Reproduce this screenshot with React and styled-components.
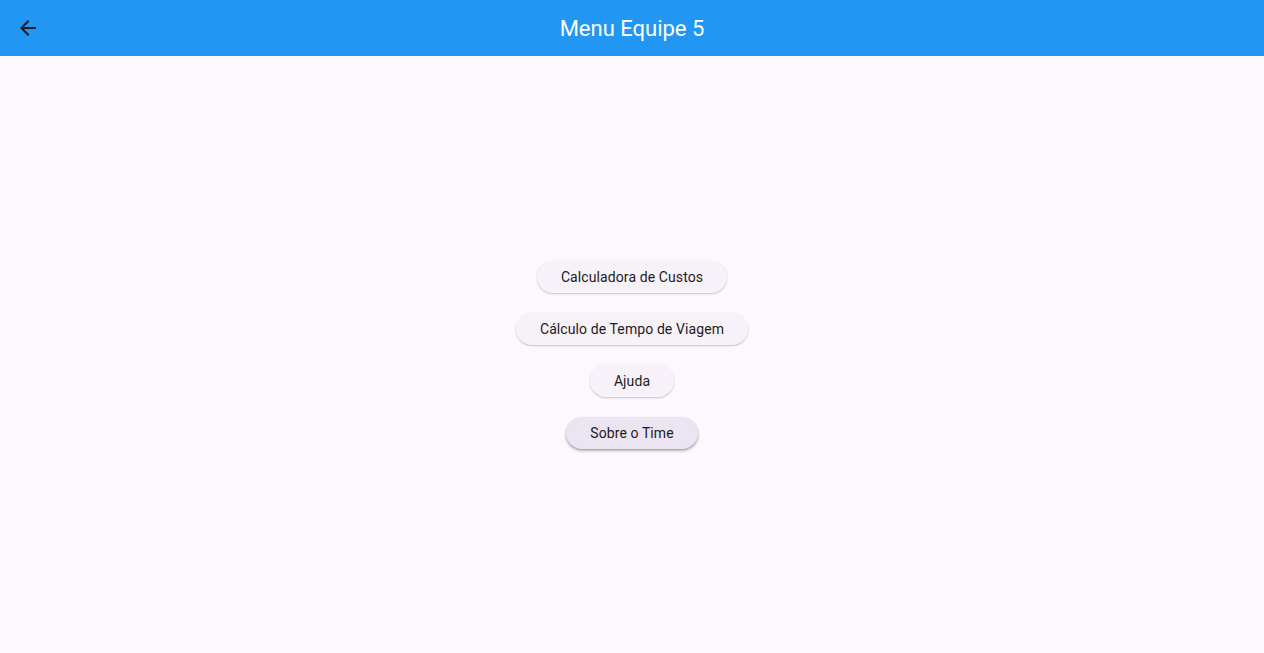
import React from "react";
import styled, { createGlobalStyle } from "styled-components";

const Global = createGlobalStyle`
  html, body { margin: 0; padding: 0; height: 100%; }
  body { background: #fdf7fe; font-family: Roboto, "Noto Sans", sans-serif; }
  #root { height: 100%; }
`;

const Page = styled.div`
  display: flex;
  flex-direction: column;
  height: 100vh;
  background: #fdf7fe;
`;

const AppBar = styled.header`
  height: 56px;
  flex: 0 0 56px;
  background: #2196f3;
  display: flex;
  align-items: center;
  position: relative;
`;

const BackButton = styled.button`
  width: 56px;
  height: 56px;
  border: none;
  background: transparent;
  padding: 0;
  display: flex;
  align-items: center;
  justify-content: center;
  cursor: pointer;
  color: #1d1b20;
`;

const Title = styled.h1`
  position: absolute;
  left: 0;
  right: 0;
  top: 0;
  height: 56px;
  margin: 0;
  display: flex;
  align-items: center;
  justify-content: center;
  font-family: Roboto, sans-serif;
  font-weight: 400;
  font-size: 22px;
  color: #ffffff;
  pointer-events: none;
`;

const Body = styled.main`
  flex: 1;
  display: flex;
  flex-direction: column;
  align-items: center;
  justify-content: center;
  gap: 20px;
`;

const MenuButton = styled.button`
  height: 32px;
  padding: 0 24px;
  border: none;
  border-radius: 16px;
  background: ${(p) => (p.$hover ? "#ebe5f1" : "#f7f2f9")};
  color: #1d1b20;
  font-family: Roboto, sans-serif;
  font-size: 14px;
  font-weight: 400;
  letter-spacing: 0.1px;
  box-shadow: ${(p) =>
    p.$hover
      ? "0 2px 3px rgba(0,0,0,0.25), 0 1px 2px rgba(0,0,0,0.15)"
      : "0 1px 2px rgba(0,0,0,0.22)"};
  cursor: pointer;
`;

const items = [
  { label: "Calculadora de Custos" },
  { label: "Cálculo de Tempo de Viagem" },
  { label: "Ajuda" },
  { label: "Sobre o Time", hover: true },
];

export default function App() {
  return (
    <Page>
      <Global />
      <AppBar>
        <BackButton aria-label="Voltar">
          <svg width="24" height="24" viewBox="0 0 24 24" fill="currentColor">
            <path d="M20 11H7.83l5.59-5.59L12 4l-8 8 8 8 1.41-1.41L7.83 13H20v-2z" />
          </svg>
        </BackButton>
        <Title>Menu Equipe 5</Title>
      </AppBar>
      <Body>
        {items.map((it) => (
          <MenuButton key={it.label} $hover={it.hover}>
            {it.label}
          </MenuButton>
        ))}
      </Body>
    </Page>
  );
}
